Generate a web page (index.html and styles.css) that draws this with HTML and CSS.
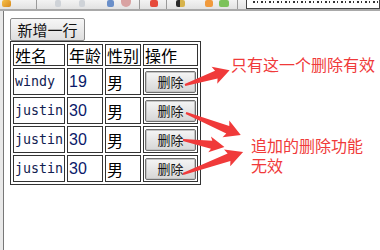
FILE: index.html
```html
<!DOCTYPE html>
<html lang="zh-CN">
<head>
  <meta charset="UTF-8">
  <title>动态添加行</title>
  <link rel="stylesheet" href="styles.css">
</head>
<body>
  <div class="toolbar">
    <span class="ico pencil"></span>
    <span class="sep" style="margin-left:21px"></span>
    <span class="ico arrow-l"></span>
    <span class="ico arrow-r"></span>
    <span class="ico blue"></span>
    <span class="ico stop"></span>
    <span class="sep"></span>
    <span class="ico pdf"></span>
    <span class="sep"></span>
    <span class="ico book"></span>
    <span class="ico star"></span>
    <span class="ico plus"></span>
    <span class="sep"></span>
    <span class="url"></span>
  </div>

  <div class="page">
    <button class="add-btn">新增一行</button>
    <table class="grid">
      <tr>
        <td class="c-name">姓名</td>
        <td class="c-age">年龄</td>
        <td class="c-sex">性别</td>
        <td class="c-op">操作</td>
      </tr>
      <tr>
        <td class="name">windy</td>
        <td class="num">19</td>
        <td>男</td>
        <td><button class="del-btn">删除</button></td>
      </tr>
      <tr>
        <td class="name">justin</td>
        <td class="num">30</td>
        <td>男</td>
        <td><button class="del-btn">删除</button></td>
      </tr>
      <tr>
        <td class="name">justin</td>
        <td class="num">30</td>
        <td>男</td>
        <td><button class="del-btn">删除</button></td>
      </tr>
      <tr>
        <td class="name">justin</td>
        <td class="num">30</td>
        <td>男</td>
        <td><button class="del-btn">删除</button></td>
      </tr>
    </table>
  </div>

  <!-- annotations drawn over the screenshot -->
  <svg class="arrows" width="380" height="250">
    <g fill="#f03a3a">
      <polygon transform="translate(185,85) rotate(-18.4)" points="0,-1 33,-4 31,-9 47,0 31,9 33,4 0,1"/>
      <polygon transform="translate(186,113) rotate(21.8)" points="0,-1 45,-4 43,-9 59,0 43,9 45,4 0,1"/>
      <polygon transform="translate(183,140) rotate(9.5)" points="0,-1 29,-4 27,-8 42,0 27,8 29,4 0,1"/>
      <polygon transform="translate(183,174) rotate(-20.1)" points="0,-1 49,-4 47,-9 64,0 47,9 49,4 0,1"/>
    </g>
  </svg>
  <div class="note note-1">只有这一个删除有效</div>
  <div class="note note-2">追加的删除功能</div>
  <div class="note note-3">无效</div>
</body>
</html>
```

FILE: styles.css
```css
body {
  margin: 0;
  width: 380px;
  height: 250px;
  overflow: hidden;
  background: #e9e9e9;
  font-family: "Noto Sans CJK SC", "Liberation Sans", sans-serif;
  position: relative;
}
.toolbar {
  height: 9px;
  display: flex;
  align-items: flex-start;
  gap: 4px;
  background: linear-gradient(#f3f3f3, #e2e2e2);
  border-bottom: 2px solid #a9a9a9;
  overflow: hidden;
}
.ico {
  width: 9px;
  height: 7px;
  border-radius: 2px;
  margin-left: 3px;
}
.pencil { background: linear-gradient(135deg, #f6c04a, #d88a1c); margin-left: 2px; }
.arrow-l, .arrow-r { background: #cfd3d8; width: 6px; margin-left: 14px; }
.blue { background: #6a8fc9; width: 7px; margin-left: 18px; }
.stop { background: #d9a3a3; border-radius: 0 0 5px 5px; width: 10px; }
.pdf { background: #e64a3a; width: 8px; margin-left: 6px; }
.book { background: linear-gradient(90deg, #2b2b2b 50%, #d7b34c 50%); width: 9px; margin-left: 5px; }
.star { background: #f19a3c; width: 8px; margin-left: 16px; }
.plus { background: #7cc25a; width: 10px; margin-left: 2px; }
.sep {
  width: 1px;
  height: 9px;
  background: #9a9a9a;
  margin-left: 4px;
}
/* address field, its text is cut off by the screenshot edge */
.url {
  flex: 1;
  height: 8px;
  margin-left: 4px;
  background:
    repeating-linear-gradient(90deg, #333 0 2px, transparent 2px 4px, #333 4px 5px, transparent 5px 8px) 6px 1px / 100% 2px no-repeat,
    #fff;
  border: 1px solid #444;
  border-top: 0;
}
.page {
  margin-left: 3px;
  height: 239px;
  background: #fff;
  border-left: 1px solid #777;
  padding: 7px 0 0 6px;
  box-sizing: border-box;
}
.add-btn {
  display: block;
  width: 75px;
  height: 23px;
  padding: 0;
  font-family: "Noto Sans CJK SC", sans-serif;
  font-size: 15px;
  line-height: 20px;
  color: #111;
  background: linear-gradient(#f6f6f6, #dedede);
  border: 1px solid #8a8a8a;
  border-radius: 2px;
}
.grid {
  border: 1px solid #333;
  border-spacing: 2px;
  font-size: 16px;
  line-height: 18px;
  color: #000;
}
.grid td {
  border: 1px solid #333;
  padding: 1px 1px;
  height: 23px;
  white-space: nowrap;
}
.grid tr:first-child td {
  height: 17px;
}
.c-name { width: 48px; }
.c-age, .c-sex { width: 32px; }
.c-op { width: 50px; }
.name {
  font-family: "DejaVu Sans Mono", monospace;
  font-size: 13.3px;
  color: #102050;
}
.num {
  font-family: "Liberation Sans", sans-serif;
  font-size: 16px;
  color: #0a1a6a;
}
.del-btn {
  display: block;
  width: 51px;
  height: 22px;
  margin: 0 auto;
  padding: 0;
  font-family: "Noto Sans CJK SC", sans-serif;
  font-size: 13px;
  line-height: 18px;
  color: #111;
  background: linear-gradient(#f5f5f5, #d6d6d6);
  border: 1px solid #707070;
  box-shadow: inset 0 0 0 1px #c4c4c4;
  border-radius: 2px;
}
.arrows {
  position: absolute;
  left: 0;
  top: 0;
}
.note {
  position: absolute;
  font-size: 16px;
  line-height: 16px;
  color: #f03a3a;
  white-space: nowrap;
}
.note-1 { left: 231px; top: 56px; }
.note-2 { left: 251px; top: 137px; }
.note-3 { left: 251px; top: 157px; }
```
